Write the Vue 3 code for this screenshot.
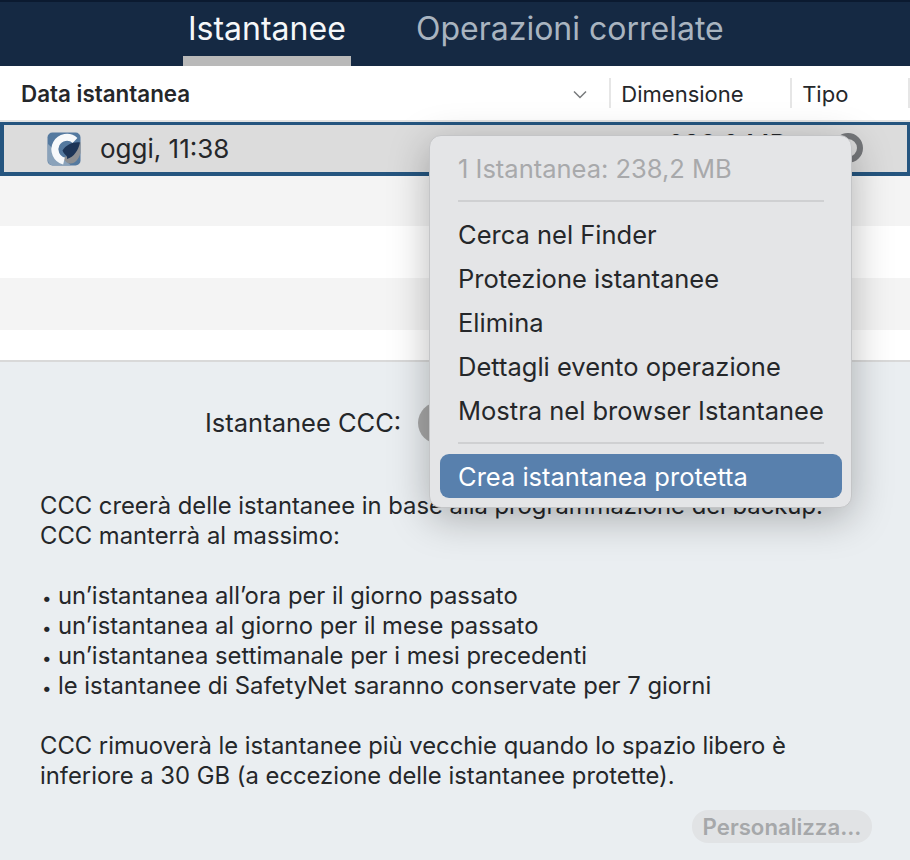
<template>
  <div class="app">
    <header class="tabs">
      <div class="tab active">Istantanee</div>
      <div class="tab">Operazioni correlate</div>
    </header>
    <div class="colhead">
      <div class="c-date"><b>Data istantanea</b>
        <svg class="chev" width="14" height="9" viewBox="0 0 14 9"><path d="M1 1.500 7 7.500 13 1.500" fill="none" stroke="#77797b" stroke-width="1.500"/></svg>
      </div>
      <div class="c-size">Dimensione</div>
      <div class="c-type">Tipo</div>
      <div class="c-end"></div>
    </div>
    <div class="row sel">
      <svg class="logo" width="34" height="34" viewBox="0 0 34 34">
        <rect x="0.500" y="0.500" width="33" height="33" rx="5" fill="#54799f"/>
        <path d="M24 33.500H6a5 5 0 0 1-5-5V12z" fill="#8aa2ba"/>
        <path d="M33.500 10 33.500 21c-2 6-5 10.500-10 10.500-3 0-5.500-2-7-5z" fill="#8d8f92"/>
        <path d="M28 8.500A12 12 0 1 0 17 29" fill="none" stroke="#f7f9fb" stroke-width="7"/>
        <path d="M15.500 18.500C19 13 26 9.500 33 10.500c-1.500 7.500-6 14.500-13 16.500 1-3.500-2.500-3.500-4.500-8.500z" fill="#1d3557"/>
      </svg>
      <span class="when">oggi, 11:38</span>
      <span class="size">238,2 MB</span>
      <span class="ring"></span>
    </div>
    <div class="stripes">
      <div class="st odd"></div>
      <div class="st even"></div>
      <div class="st odd two"></div>
      <div class="st last"></div>
    </div>
    <section class="panel">
      <div class="toggle-line">
        <span>Istantanee CCC:</span>
        <span class="knob"></span>
      </div>
      <p class="para first">CCC creerà delle istantanee in base alla programmazione del backup.<br>CCC manterrà al massimo:</p>
      <ul>
        <li v-for="b in bullets" :key="b"><span class="dot">•</span>{{ b }}</li>
      </ul>
      <p class="para">CCC rimuoverà le istantanee più vecchie quando lo spazio libero è<br>inferiore a 30 GB (a eccezione delle istantanee protette).</p>
      <div class="actions"><button class="btn" disabled>Personalizza...</button></div>
    </section>
    <div class="menu">
      <div class="mi dim">1 Istantanea: 238,2 MB</div>
      <div class="sep s1"></div>
      <div class="mi" v-for="m in items" :key="m">{{ m }}</div>
      <div class="sep s2"></div>
      <div class="mi hi">Crea istantanea protetta</div>
    </div>
  </div>
</template>

<script setup>
const bullets = [
  "un’istantanea all’ora per il giorno passato",
  "un’istantanea al giorno per il mese passato",
  "un’istantanea settimanale per i mesi precedenti",
  "le istantanee di SafetyNet saranno conservate per 7 giorni",
];
const items = [
  "Cerca nel Finder",
  "Protezione istantanee",
  "Elimina",
  "Dettagli evento operazione",
  "Mostra nel browser Istantanee",
];
</script>

<style>
html, body { margin: 0; background: #eaeef1; }
</style>

<style scoped>
.app {
  position: relative;
  width: 910px;
  height: 860px;
  overflow: hidden;
  font-family: Inter, "Liberation Sans", sans-serif;
  color: #25272a;
  background: #eaeef1;
}
.tabs {
  height: 64px;
  border-top: 2px solid #0b1a30;
  background: #152943;
  display: flex;
  padding-left: 183px;
  gap: 60px;
}
.tab {
  font-size: 32px;
  line-height: 54px;
  color: #a9b4c0;
  padding: 0 5px;
}
.tab.active {
  color: #f5f7f9;
  height: 54px;
  border-bottom: 10px solid #b9b9b9;
  width: 158px;
}
.colhead {
  height: 54px;
  background: #fff;
  display: flex;
  align-items: center;
  font-size: 22px;
  border-bottom: 2px solid #e3e3e3;
}
.c-date {
  width: 610px;
  box-sizing: border-box;
  padding: 0 22px 0 21px;
  display: flex;
  justify-content: space-between;
  align-items: center;
}
.c-date b { font-weight: 600; font-size: 22.400px; }
.c-size, .c-type, .c-end {
  border-left: 2px solid #e6e6e6;
  height: 30px;
  line-height: 32px;
  box-sizing: border-box;
  padding-left: 10px;
}
.c-size { width: 181px; }
.c-type { width: 118px; }
.c-end { width: 1px; padding: 0; }
.chev { margin-top: 2px; }
.row.sel {
  height: 54px;
  box-sizing: border-box;
  border-style: solid;
  border-color: #25557f;
  border-width: 3px 3px 4px 4px;
  background: #dcdcdc;
  display: flex;
  align-items: center;
  position: relative;
  font-size: 26px;
}
.logo { margin-left: 43px; }
.when { margin-left: 19px; }
.size { position: absolute; left: 664px; top: 4px; line-height: 30px; }
.ring {
  position: absolute;
  left: 829px;
  top: 8px;
  width: 30px;
  height: 30px;
  box-sizing: border-box;
  border: 6px solid #75777a;
  border-radius: 50%;
}
.st.odd { background: #f4f4f4; height: 50px; }
.st.even { background: #fff; height: 52px; }
.st.two { height: 52px; }
.st.last { background: #fff; height: 32px; border-bottom: 2px solid #d9d9d9; box-sizing: border-box; }
.panel {
  padding: 0 40px;
  font-size: 23.800px;
  line-height: 30px;
  position: relative;
  height: 498px;
}
.toggle-line {
  display: flex;
  align-items: center;
  height: 44px;
  padding: 39px 0 1px 165px;
  font-size: 25.500px;
  gap: 17px;
}
.knob {
  flex: none;
  width: 42px;
  height: 42px;
  border-radius: 50%;
  background: #a8a8a8;
}
.para { margin: 0; }
.first { margin-top: 45px; }
ul { list-style: none; margin: 30px 0; padding: 0; }
li { height: 30px; }
.dot { display: inline-block; width: 18px; padding-left: 2px; box-sizing: border-box; font-size: 17px; line-height: 0; }
.actions {
  position: absolute;
  right: 38px;
  top: 448px;
}
.btn {
  display: block;
  width: 180px;
  height: 33px;
  border: 0;
  border-radius: 16px;
  background: #e1e3e5;
  color: #a6a8aa;
  font: 600 22.200px Inter, "Liberation Sans", sans-serif;
  padding: 0;
}
.menu {
  position: absolute;
  left: 429px;
  top: 135px;
  width: 423px;
  height: 373px;
  box-sizing: border-box;
  padding: 11px 9px 0 10px;
  background: #e4e5e7;
  border-radius: 12px;
  border: 1px solid #c4c5c7;
  box-shadow: 0 10px 40px rgba(0, 0, 0, 0.28);
  font-size: 25.500px;
}
.mi { height: 44px; line-height: 44px; padding-left: 18px; }
.dim { color: #a8a9ab; }
.sep { height: 2px; background: #cfd0d2; margin: 0 18px; }
.s1 { margin-top: 9px; margin-bottom: 11px; }
.s2 { margin-top: 9px; margin-bottom: 10px; }
.hi {
  color: #fff;
  background: #5880ad;
  border-radius: 9px;
  line-height: 46px;
}
</style>
